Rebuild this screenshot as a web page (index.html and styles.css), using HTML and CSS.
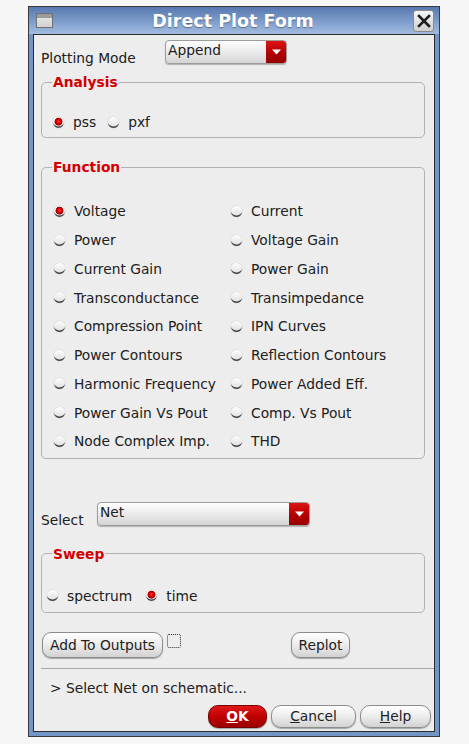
FILE: index.html
```html
<!DOCTYPE html>
<html>
<head>
<meta charset="utf-8">
<link rel="stylesheet" href="styles.css">
</head>
<body>
<div class="window">
  <div class="titlebar">
    <span class="winicon"></span>
    <span class="title">Direct Plot Form</span>
    <span class="close"><svg width="14" height="14" viewBox="0 0 14 14"><path d="M2 2 L12 12 M12 2 L2 12" stroke="#1e1e1e" stroke-width="2.6" stroke-linecap="square"/></svg></span>
  </div>
  <div class="content">
    <div class="mode-row">
      <span class="mode-lbl">Plotting Mode</span>
      <div class="combo combo-mode">
        <span class="combo-text">Append</span>
        <span class="combo-arrow"><svg width="9" height="6" viewBox="0 0 9 6"><polygon points="0,0.5 9,0.5 4.5,5.5" fill="#fff"/></svg></span>
      </div>
    </div>

    <fieldset class="group analysis">
      <legend>Analysis</legend>
      <div class="radios">
        <span class="radio"><span class="rb on"></span>pss</span>
        <span class="radio"><span class="rb"></span>pxf</span>
      </div>
    </fieldset>

    <fieldset class="group function">
      <legend>Function</legend>
      <div class="fgrid">
        <span class="radio"><span class="rb on"></span>Voltage</span>
        <span class="radio"><span class="rb"></span>Current</span>
        <span class="radio"><span class="rb"></span>Power</span>
        <span class="radio"><span class="rb"></span>Voltage Gain</span>
        <span class="radio"><span class="rb"></span>Current Gain</span>
        <span class="radio"><span class="rb"></span>Power Gain</span>
        <span class="radio"><span class="rb"></span>Transconductance</span>
        <span class="radio"><span class="rb"></span>Transimpedance</span>
        <span class="radio"><span class="rb"></span>Compression Point</span>
        <span class="radio"><span class="rb"></span>IPN Curves</span>
        <span class="radio"><span class="rb"></span>Power Contours</span>
        <span class="radio"><span class="rb"></span>Reflection Contours</span>
        <span class="radio"><span class="rb"></span>Harmonic Frequency</span>
        <span class="radio"><span class="rb"></span>Power Added Eff.</span>
        <span class="radio"><span class="rb"></span>Power Gain Vs Pout</span>
        <span class="radio"><span class="rb"></span>Comp. Vs Pout</span>
        <span class="radio"><span class="rb"></span>Node Complex Imp.</span>
        <span class="radio"><span class="rb"></span>THD</span>
      </div>
    </fieldset>

    <div class="select-row">
      <span class="sel-lbl">Select</span>
      <div class="combo combo-sel">
        <span class="combo-text">Net</span>
        <span class="combo-arrow"><svg width="9" height="6" viewBox="0 0 9 6"><polygon points="0,0.5 9,0.5 4.5,5.5" fill="#fff"/></svg></span>
      </div>
    </div>

    <fieldset class="group sweep">
      <legend>Sweep</legend>
      <div class="radios">
        <span class="radio"><span class="rb"></span>spectrum</span>
        <span class="radio"><span class="rb on"></span>time</span>
      </div>
    </fieldset>

    <div class="btn-row">
      <span class="btn btn-add">Add To Outputs</span>
      <span class="check"></span>
      <span class="btn btn-replot">Replot</span>
    </div>

    <div class="sep"></div>
    <div class="status">&gt; Select Net on schematic...</div>

    <div class="dlg-btns">
      <span class="btn btn-ok"><u>O</u>K</span>
      <span class="btn btn-cancel"><u>C</u>ancel</span>
      <span class="btn btn-help"><u>H</u>elp</span>
    </div>
  </div>
</div>
</body>
</html>
```

FILE: styles.css
```css
body {
  margin: 0;
  background: #f6f6f6;
  font-family: "DejaVu Sans", "Noto Sans", sans-serif;
  font-size: 13.8px;
  color: #202020;
}

.window {
  box-sizing: border-box;
  margin: 6px 0 0 28px;
  width: 412px;
  height: 731px;
  border: 1px solid #3a3a3a;
  background: #7294c7;
  padding: 0 4px 4px;
  display: flex;
  flex-direction: column;
}

.titlebar {
  height: 27px;
  margin: 0 -4px;
  padding: 0 5px 0 7px;
  display: flex;
  align-items: center;
  background: linear-gradient(#5879b0, #82a1cf 60%, #a3bce0);
}

.winicon {
  width: 17px;
  height: 15px;
  box-sizing: border-box;
  border: 1px solid #6f6f6f;
  background: linear-gradient(#9b9b9b 0, #9b9b9b 4px, #e2e2e2 4px, #d2d2d2);
}

.title {
  flex: 1;
  text-align: center;
  color: #fff;
  font-weight: bold;
  font-size: 17.5px;
  text-shadow: 0 1px 1px rgba(0, 0, 0, 0.35);
}

.close {
  width: 21px;
  height: 22px;
  box-sizing: border-box;
  border: 1px solid #8a8a8a;
  border-radius: 3px;
  background: linear-gradient(#f6f6f6, #cfcfcf);
  display: flex;
  align-items: center;
  justify-content: center;
}

.content {
  flex: 1;
  background: #ededed;
  border: 1px solid #2b2b2b;
  display: flex;
  flex-direction: column;
}

.mode-row {
  display: flex;
  margin: 5px 0 0 7px;
}

.mode-lbl {
  width: 124px;
  margin-top: 10px;
  line-height: 16px;
}

.combo {
  height: 24px;
  box-sizing: border-box;
  border: 1px solid #9c9c9c;
  border-radius: 4px;
  display: flex;
  overflow: hidden;
  background: linear-gradient(#fefefe, #e6e6e6 60%, #d4d4d4);
  box-shadow: 0 1px 1px rgba(0, 0, 0, 0.25);
}

.combo-mode { width: 122px; }
.combo-sel { width: 213px; }

.combo-text {
  flex: 1;
  padding-left: 2px;
  line-height: 19px;
}

.combo-arrow {
  width: 20px;
  background: linear-gradient(#dc1414, #b00000 60%, #960000);
  display: flex;
  align-items: center;
  justify-content: center;
}

.group {
  margin: 0 9px 0 7px;
  border: 1px solid #b2b2b2;
  border-radius: 5px;
  padding: 0;
  min-width: 0;
}

.group legend {
  margin-left: 10px;
  padding: 0 1px;
  color: #d20000;
  font-weight: bold;
  line-height: 16px;
}

.analysis { margin-top: 8px; }
.analysis .radios {
  display: flex;
  gap: 12px;
  padding: 24px 0 7px 11px;
}

.radio {
  display: inline-flex;
  align-items: center;
  gap: 9px;
  line-height: 16px;
  white-space: nowrap;
}

.rb {
  width: 11px;
  height: 11px;
  border-radius: 50%;
  background: linear-gradient(#fdfdfd, #dedede);
  box-shadow: inset 0 -2px 0 -0.5px #4a4a4a, 0 0 0 0.5px #d0d0d0;
}

.rb.on {
  background:
    radial-gradient(circle at 50% 42%, #ff3a3a 0, #e00000 2px, #a00000 3.6px, rgba(0,0,0,0) 4.3px),
    linear-gradient(#fdfdfd, #dedede);
}

.function { margin-top: 21px; }
.fgrid {
  display: grid;
  grid-template-columns: 177px 1fr;
  grid-auto-rows: 28.75px;
  align-items: center;
  padding: 22px 0 2px 12px;
}

.select-row {
  display: flex;
  margin: 43px 0 0 7px;
}

.sel-lbl {
  width: 56px;
  margin-top: 10px;
  line-height: 16px;
}

.sweep { margin-top: 18px; }
.sweep .radios {
  display: flex;
  gap: 14px;
  padding: 26px 0 8px 5px;
}

.btn-row {
  display: flex;
  align-items: flex-start;
  margin: 19px 0 0 8px;
}

.btn {
  box-sizing: border-box;
  height: 26px;
  border: 1px solid #8c8c8c;
  border-radius: 9px;
  background: linear-gradient(#ffffff, #ececec 50%, #d2d2d2);
  box-shadow: 0 1px 1px rgba(0, 0, 0, 0.3);
  display: flex;
  align-items: center;
  justify-content: center;
  white-space: nowrap;
}

.btn-add { width: 121px; }

.check {
  width: 14px;
  height: 14px;
  box-sizing: border-box;
  border: 1px dotted #333;
  border-radius: 2px;
  margin: 2px 0 0 4px;
}

.btn-replot {
  width: 59px;
  margin-left: 110px;
}

.sep {
  margin: 10px 0 0 7px;
  border-top: 1px solid #a9a9a9;
}

.status {
  margin-top: 11px;
  padding-left: 16px;
  line-height: 16px;
}

.dlg-btns {
  display: flex;
  justify-content: flex-end;
  gap: 4px;
  margin-top: 9px;
  padding-right: 3px;
}

.dlg-btns .btn {
  height: 23px;
  border-radius: 10px;
}

.btn-ok {
  width: 59px;
  color: #fff;
  font-weight: bold;
  border-color: #7a0000 !important;
  background: linear-gradient(#e01818, #c00000 50%, #9c0000) !important;
}

.btn-cancel { width: 85px; }
.btn-help { width: 71px; }
```
